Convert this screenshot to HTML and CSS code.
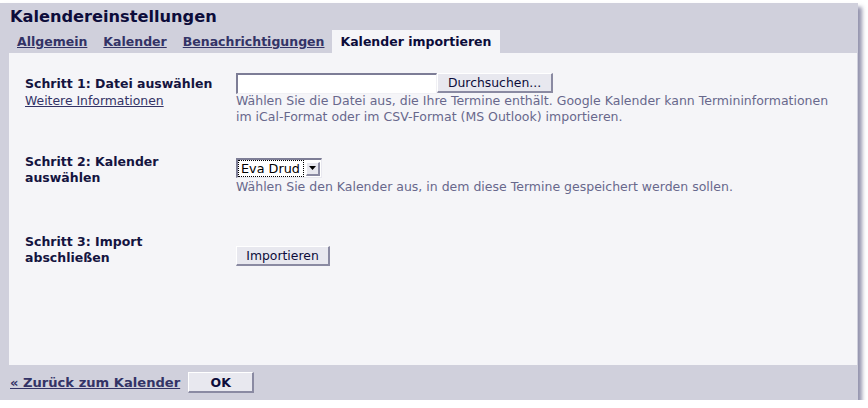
FILE: index.html
```html
<!DOCTYPE html>
<html lang="de">
<head>
<meta charset="utf-8">
<title>Kalendereinstellungen</title>
<link rel="stylesheet" href="styles.css">
</head>
<body>
<div class="panel">
  <h1 class="title">Kalendereinstellungen</h1>
  <div class="tabs">
    <a class="tab" href="#">Allgemein</a>
    <a class="tab" href="#">Kalender</a>
    <a class="tab" href="#">Benachrichtigungen</a>
    <span class="tab active">Kalender importieren</span>
  </div>
  <div class="content">
    <div class="row row1">
      <div class="label">
        <div class="step">Schritt 1: Datei auswählen</div>
        <a class="more" href="#">Weitere Informationen</a>
      </div>
      <div class="field">
        <div class="file">
          <span class="filebox"></span>
          <span class="btn browse">Durchsuchen...</span>
        </div>
        <div class="help">Wählen Sie die Datei aus, die Ihre Termine enthält. Google Kalender kann Termininformationen im iCal-Format oder im CSV-Format (MS Outlook) importieren.</div>
      </div>
    </div>
    <div class="row row2">
      <div class="label">
        <div class="step">Schritt 2: Kalender auswählen</div>
      </div>
      <div class="field">
        <div class="select"><span class="selval">Eva Drud</span><span class="arrow"><svg width="7" height="4" viewBox="0 0 7 4"><path d="M0 0H7L3.5 4Z" fill="#000"/></svg></span></div>
        <div class="help">Wählen Sie den Kalender aus, in dem diese Termine gespeichert werden sollen.</div>
      </div>
    </div>
    <div class="row row3">
      <div class="label">
        <div class="step">Schritt 3: Import abschließen</div>
      </div>
      <div class="field">
        <span class="btn import">Importieren</span>
      </div>
    </div>
  </div>
  <div class="footer">
    <a class="back" href="#">« Zurück zum Kalender</a>
    <span class="btn ok">OK</span>
  </div>
</div>
</body>
</html>
```
FILE: styles.css
```css
html, body {
  margin: 0;
  padding: 0;
  background: #ffffff;
}
body {
  font-family: "DejaVu Sans", sans-serif;
}
.panel {
  width: 858px;
  height: 397px;
  margin-top: 3px;
  background: #d0d0dc;
  box-shadow: 4px 4px 4px rgba(90, 90, 130, 0.65);
  display: flex;
  flex-direction: column;
}
.title {
  margin: 0;
  padding: 4px 0 0 10px;
  height: 23px;
  font-size: 16.2px;
  font-weight: bold;
  line-height: 20px;
  color: #0c0c3a;
}
.tabs {
  display: flex;
  padding-left: 9px;
  height: 23px;
}
.tab {
  padding: 0 8px;
  font-size: 12.5px;
  font-weight: bold;
  line-height: 23px;
  color: #333366;
  text-decoration: underline;
}
.tab.active {
  background: #f5f5f8;
  color: #0c0c3a;
  text-decoration: none;
}
.content {
  flex: 1;
  margin: 0 1px 0 9px;
  background: #f5f5f8;
  padding: 20px 0 0 16px;
}
.row {
  display: flex;
}
.row2 { margin-top: 34px; }
.row3 { margin-top: 50px; }
.label {
  width: 211px;
  flex: none;
}
.row1 .label { padding-top: 3px; }
.row2 .label { margin-top: -4px; }
.row3 .label { margin-top: -11px; }
.step {
  width: 190px;
  font-size: 12.5px;
  font-weight: bold;
  line-height: 16px;
  color: #141440;
}
.more {
  display: block;
  font-size: 12.4px;
  line-height: 17px;
  color: #333366;
  text-decoration: underline;
}
.field {
  flex: 1;
}
.file {
  display: flex;
  height: 20px;
}
.filebox {
  width: 198px;
  height: 18px;
  background: #ffffff;
  border-style: solid;
  border-width: 2px 1px 1px 2px;
  border-color: #7d7d96 #f0f0f4 #f0f0f4 #7d7d96;
}
.btn {
  display: inline-flex;
  align-items: center;
  justify-content: center;
  box-sizing: border-box;
  background: #e8e8ef;
  border-style: solid;
  border-width: 1px 2px 2px 1px;
  border-color: #ffffff #8a8aa2 #8a8aa2 #ffffff;
  font-size: 12.4px;
  color: #0c0c3a;
}
.browse {
  width: 116px;
  height: 20px;
}
.help {
  max-width: 600px;
  font-size: 12.5px;
  line-height: 15.5px;
  color: #68688c;
}
.select {
  display: inline-flex;
  align-items: center;
  box-sizing: border-box;
  width: 86px;
  height: 20px;
  padding: 1px;
  background: #ffffff;
  border-style: solid;
  border-width: 2px 1px 1px 2px;
  border-color: #7d7d96 #e8e8ef #e8e8ef #7d7d96;
  margin-bottom: 1px;
}
.selval {
  flex: 1;
  height: 15px;
  font-size: 12.8px;
  line-height: 15px;
  color: #000000;
  padding-left: 2px;
  outline: 1px dotted #000000;
  margin-right: 3px;
}
.arrow {
  box-sizing: border-box;
  width: 14px;
  height: 14px;
  background: #e8e8ef;
  border-style: solid;
  border-width: 1px 2px 2px 1px;
  border-color: #ffffff #8a8aa2 #8a8aa2 #ffffff;
  display: flex;
  align-items: center;
  justify-content: center;
}
.import {
  width: 94px;
  height: 20px;
}
.footer {
  height: 35px;
  display: flex;
  align-items: center;
  padding-left: 10px;
}
.back {
  font-size: 13.1px;
  font-weight: bold;
  color: #333366;
  text-decoration: underline;
}
.ok {
  margin-left: 8px;
  width: 66px;
  height: 21px;
  font-weight: bold;
  font-size: 12.5px;
}
```
